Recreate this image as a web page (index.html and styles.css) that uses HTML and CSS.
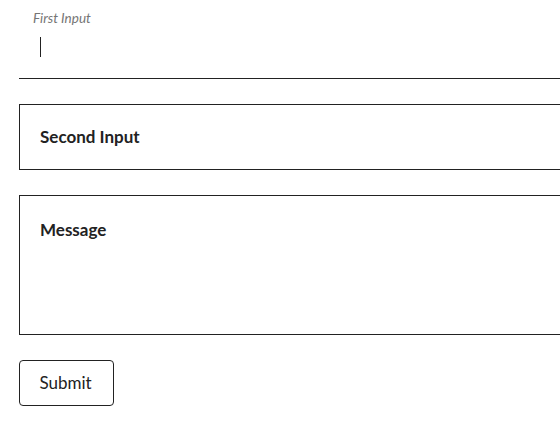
FILE: index.html
```html
<!DOCTYPE html>
<html lang="en">
<head>
<meta charset="utf-8">
<title>Form</title>
<link rel="stylesheet" href="styles.css">
</head>
<body>
<form class="form">
  <div class="field-underline">
    <div class="float-label">First Input</div>
    <div class="caret-row"><span class="caret"></span></div>
  </div>
  <div class="field-box">
    <div class="placeholder">Second Input</div>
  </div>
  <div class="field-box field-area">
    <div class="placeholder">Message</div>
  </div>
  <button type="button" class="submit">Submit</button>
</form>
</body>
</html>
```
FILE: styles.css
```css
html, body {
  margin: 0;
  padding: 0;
  overflow: hidden;
  background: #fff;
}
body {
  font-family: Lato, "Open Sans", sans-serif;
  color: #222;
}
.form {
  width: 620px;
  padding: 0 0 0 19px;
  display: flex;
  flex-direction: column;
  align-items: flex-start;
  gap: 25px;
}
.field-underline {
  align-self: stretch;
  box-sizing: border-box;
  height: 79px;
  border-bottom: 1px solid #222;
  padding-top: 10px;
}
.float-label {
  font-size: 13.5px;
  line-height: 16px;
  font-style: italic;
  color: #757575;
  padding-left: 14px;
}
.caret-row {
  padding-left: 21px;
  padding-top: 11px;
}
.caret {
  display: block;
  width: 1px;
  height: 20px;
  background: #222;
}
.field-box {
  align-self: stretch;
  box-sizing: border-box;
  height: 66px;
  border: 1px solid #222;
  padding: 21px 0 0 20px;
}
.field-area {
  height: 140px;
  padding-top: 23px;
}
.placeholder {
  font-size: 17px;
  line-height: 21px;
  font-weight: 700;
  color: #222;
}
.submit {
  font-family: inherit;
  font-size: 17px;
  line-height: 21px;
  color: #222;
  background: #fff;
  border: 1px solid #222;
  border-radius: 4px;
  height: 46px;
  width: 95px;
  padding: 0 2px 2px 0;
  margin: 0;
}
```
